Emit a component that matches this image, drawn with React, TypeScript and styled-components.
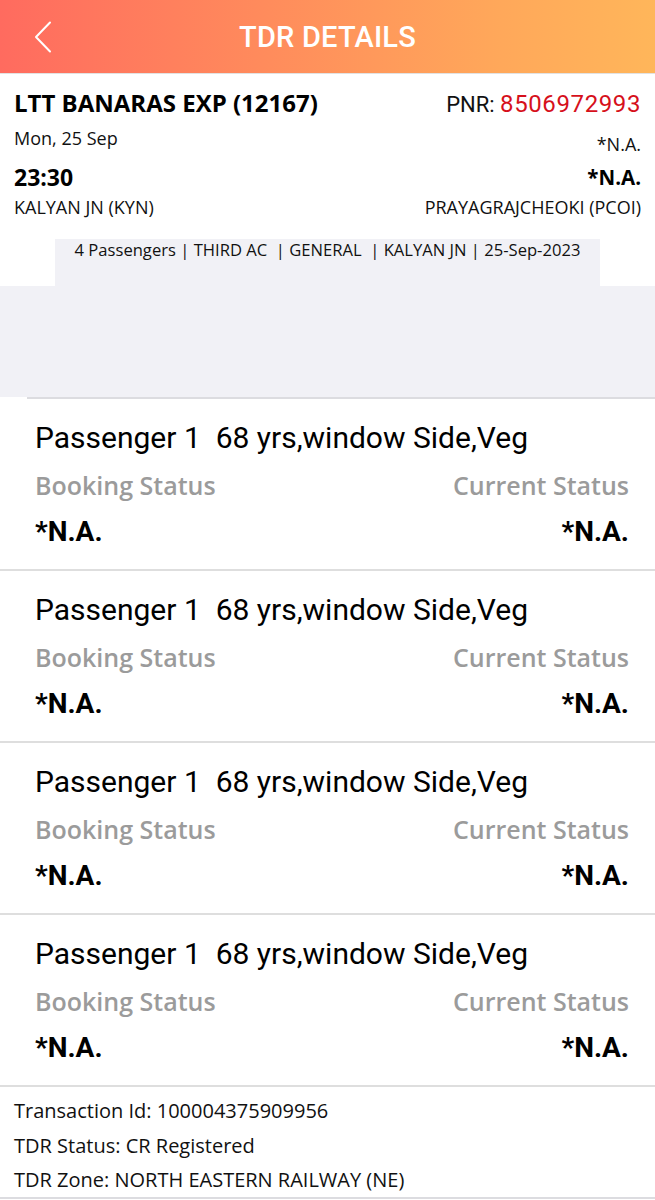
import styled, { createGlobalStyle } from "styled-components";

const GlobalStyle = createGlobalStyle`
  html, body {
    margin: 0;
    padding: 0;
    background: #ffffff;
  }
  body {
    font-family: "Open Sans", "Liberation Sans", sans-serif;
    color: #000;
  }
`;

const Screen = styled.div`
  width: 655px;
  min-height: 1200px;
  display: flex;
  flex-direction: column;
  background: #fff;
`;

const NavBar = styled.header`
  height: 73px;
  flex-shrink: 0;
  display: flex;
  align-items: center;
  justify-content: center;
  position: relative;
  background: linear-gradient(90deg, #ff6b5f 0%, #ff8b5c 40%, #ffa75a 75%, #ffb65a 100%);
  border-bottom: 1px solid #e2e2e2;
`;

const BackButton = styled.button`
  position: absolute;
  left: 30px;
  top: 20px;
  width: 26px;
  height: 34px;
  padding: 0;
  border: none;
  background: none;
  display: flex;
  align-items: center;
  justify-content: center;
`;

const Title = styled.h1`
  margin: 0;
  font-family: Roboto, "Liberation Sans", sans-serif;
  font-weight: 500;
  font-size: 29px;
  color: #fff;
  letter-spacing: 0.2px;
`;

const TrainInfo = styled.section`
  padding: 12px 14px 0 14px;
  display: grid;
  grid-template-columns: 1fr auto;
`;

const Cell = styled.div<{ $right?: boolean; $h: number; $dy?: number }>`
  height: ${({ $h }) => $h}px;
  padding-top: ${({ $dy }) => $dy ?? 0}px;
  box-sizing: border-box;
  display: flex;
  align-items: center;
  justify-content: ${({ $right }) => ($right ? "flex-end" : "flex-start")};
  white-space: nowrap;
`;

const TrainName = styled.span`
  font-weight: 700;
  font-size: 24px;
`;

const Plain = styled.span<{ $size: number }>`
  font-size: ${({ $size }) => $size}px;
  color: #111;
`;

const Strong = styled.span<{ $size: number }>`
  font-size: ${({ $size }) => $size}px;
  font-weight: 700;
`;

const Pnr = styled.span`
  font-family: Roboto, "Liberation Sans", sans-serif;
  font-size: 22px;
  color: #111;
`;

const PnrNumber = styled.span`
  color: #d6101b;
  font-size: 24px;
  letter-spacing: 0.6px;
`;

const SummaryWrap = styled.div`
  margin-top: 21px;
  display: flex;
  flex-direction: column;
`;

const SummaryTab = styled.div`
  margin: 0 55px;
  height: 47px;
  background: #f1f1f6;
  display: flex;
  justify-content: center;
  font-size: 16.6px;
  line-height: 22px;
  color: #111;
  white-space: pre;
`;

const SummaryBand = styled.div`
  height: 111px;
  background: #f1f1f6;
`;

const Divider = styled.div<{ $inset?: number }>`
  height: 2px;
  margin-left: ${({ $inset }) => $inset ?? 0}px;
  background: #dcdce0;
`;

const PassengerCard = styled.div`
  height: 170px;
  padding: 0 26px 0 35px;
  display: flex;
  flex-direction: column;
  border-bottom: 2px solid #dedede;
`;

const PassengerTitle = styled.div`
  font-family: Roboto, "Liberation Sans", sans-serif;
  font-size: 30px;
  height: 36px;
  margin-top: 20px;
  display: flex;
  align-items: center;
  white-space: pre;
`;

const StatusRow = styled.div<{ $h: number; $mt: number }>`
  display: flex;
  justify-content: space-between;
  align-items: center;
  height: ${({ $h }) => $h}px;
  margin-top: ${({ $mt }) => $mt}px;
`;

const StatusLabel = styled.span`
  font-size: 25px;
  font-weight: 600;
  color: #9b9b9b;
`;

const StatusValue = styled.span`
  font-family: Roboto, "Liberation Sans", sans-serif;
  font-size: 28px;
  font-weight: 700;
`;

const Footer = styled.footer`
  padding: 6px 14px 0 14px;
  height: 112px;
  box-sizing: border-box;
  border-bottom: 2px solid #dcdce0;
  display: flex;
  flex-direction: column;
`;

const FooterLine = styled.div`
  height: 35px;
  display: flex;
  align-items: center;
  font-size: 20px;
  color: #111;
`;

const passengers = [1, 2, 3, 4].map(() => ({
  label: "Passenger 1  68 yrs,window Side,Veg",
  booking: "*N.A.",
  current: "*N.A.",
}));

export default function App() {
  return (
    <>
      <GlobalStyle />
      <Screen>
        <NavBar>
          <BackButton aria-label="Back">
            <svg width="20" height="32" viewBox="0 0 20 32">
              <path d="M17 1.5 L3 16 L17 30.5" fill="none" stroke="#fff" strokeWidth="2" strokeLinecap="round" strokeLinejoin="round" />
            </svg>
          </BackButton>
          <Title>TDR DETAILS</Title>
        </NavBar>

        <TrainInfo>
          <Cell $h={32}>
            <TrainName>LTT BANARAS EXP (12167)</TrainName>
          </Cell>
          <Cell $h={32} $dy={4} $right>
            <Pnr>
              PNR: <PnrNumber>8506972993</PnrNumber>
            </Pnr>
          </Cell>
          <Cell $h={40}>
            <Plain $size={18}>Mon, 25 Sep</Plain>
          </Cell>
          <Cell $h={40} $dy={12} $right>
            <Plain $size={18}>*N.A.</Plain>
          </Cell>
          <Cell $h={38}>
            <Strong $size={23}>23:30</Strong>
          </Cell>
          <Cell $h={38} $right>
            <Strong $size={20.5}>*N.A.</Strong>
          </Cell>
          <Cell $h={22}>
            <Plain $size={18}>KALYAN JN (KYN)</Plain>
          </Cell>
          <Cell $h={22} $right>
            <Plain $size={18}>PRAYAGRAJCHEOKI (PCOI)</Plain>
          </Cell>
        </TrainInfo>

        <SummaryWrap>
          <SummaryTab>4 Passengers | THIRD AC  | GENERAL  | KALYAN JN | 25-Sep-2023</SummaryTab>
          <SummaryBand />
          <Divider $inset={27} />
        </SummaryWrap>

        {passengers.map((p, i) => (
          <PassengerCard key={i}>
            <PassengerTitle>{p.label}</PassengerTitle>
            <StatusRow $h={32} $mt={14}>
              <StatusLabel>Booking Status</StatusLabel>
              <StatusLabel>Current Status</StatusLabel>
            </StatusRow>
            <StatusRow $h={34} $mt={13}>
              <StatusValue>{p.booking}</StatusValue>
              <StatusValue>{p.current}</StatusValue>
            </StatusRow>
          </PassengerCard>
        ))}

        <Footer>
          <FooterLine>Transaction Id: 100004375909956</FooterLine>
          <FooterLine>TDR Status: CR Registered</FooterLine>
          <FooterLine>TDR Zone: NORTH EASTERN RAILWAY (NE)</FooterLine>
        </Footer>
      </Screen>
    </>
  );
}
